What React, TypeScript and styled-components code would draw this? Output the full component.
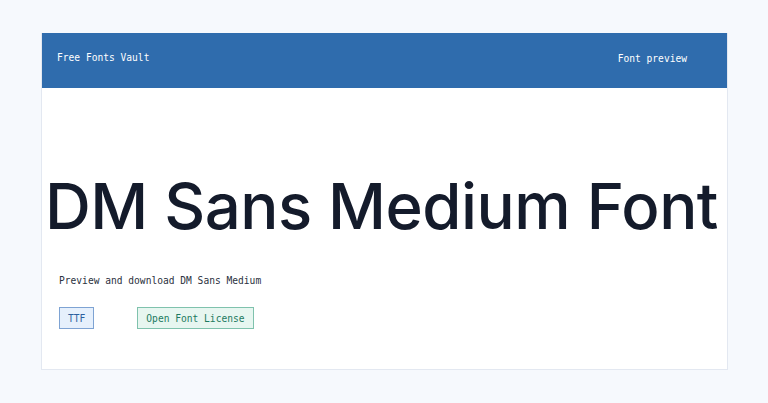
import React from "react";
import styled, { createGlobalStyle } from "styled-components";

const Global = createGlobalStyle`
  html, body { margin: 0; padding: 0; background: #f6f9fd; }
  body { font-family: "DejaVu Sans Mono", "Liberation Mono", monospace; }
`;

const Page = styled.div`
  padding: 33px 40px 32px 41px;
`;

const Card = styled.div`
  background: #ffffff;
  border: 1px solid #e3e8f1;
  border-top: none;
  width: 687px;
  box-sizing: border-box;
  min-height: 337px;
  display: flex;
  flex-direction: column;
`;

const Header = styled.header`
  background: #2f6cad;
  height: 55px;
  display: flex;
  align-items: center;
  justify-content: space-between;
  padding: 0 40px 0 15px;
  color: #ffffff;
  font-size: 9.6px;
`;

const Brand = styled.div`
  margin-top: -7px;
`;

const NavLink = styled.a`
  color: #ffffff;
  text-decoration: none;
  margin-top: -4px;
`;

const Body = styled.main`
  padding: 0 0 0 17px;
  display: flex;
  flex-direction: column;
`;

const Title = styled.h1`
  margin: 78px 0 0 -14px;
  font-family: "Inter", "Noto Sans", sans-serif;
  font-weight: 500;
  font-size: 63.5px;
  line-height: 80px;
  color: #141b2b;
  white-space: nowrap;
  letter-spacing: -0.5px;
`;

const Lead = styled.p`
  margin: 29px 0 0;
  font-size: 9.6px;
  color: #2b3140;
`;

const Tags = styled.div`
  display: flex;
  gap: 43px;
  margin-top: 21px;
`;

const Tag = styled.span<{ $tone: "blue" | "green" }>`
  display: inline-flex;
  align-items: center;
  height: 22px;
  box-sizing: border-box;
  padding: 0 8px;
  font-size: 9.6px;
  border: 1px solid ${(p) => (p.$tone === "blue" ? "#7ea3d3" : "#7fc2ad")};
  background: ${(p) => (p.$tone === "blue" ? "#e6f0fc" : "#e7f6f0")};
  color: ${(p) => (p.$tone === "blue" ? "#2c5f9e" : "#1d7a60")};
`;

export default function App() {
  return (
    <>
      <Global />
      <Page>
        <Card>
          <Header>
            <Brand>Free Fonts Vault</Brand>
            <NavLink href="#">Font preview</NavLink>
          </Header>
          <Body>
            <Title>DM Sans Medium Font</Title>
            <Lead>Preview and download DM Sans Medium</Lead>
            <Tags>
              <Tag $tone="blue">TTF</Tag>
              <Tag $tone="green">Open Font License</Tag>
            </Tags>
          </Body>
        </Card>
      </Page>
    </>
  );
}
